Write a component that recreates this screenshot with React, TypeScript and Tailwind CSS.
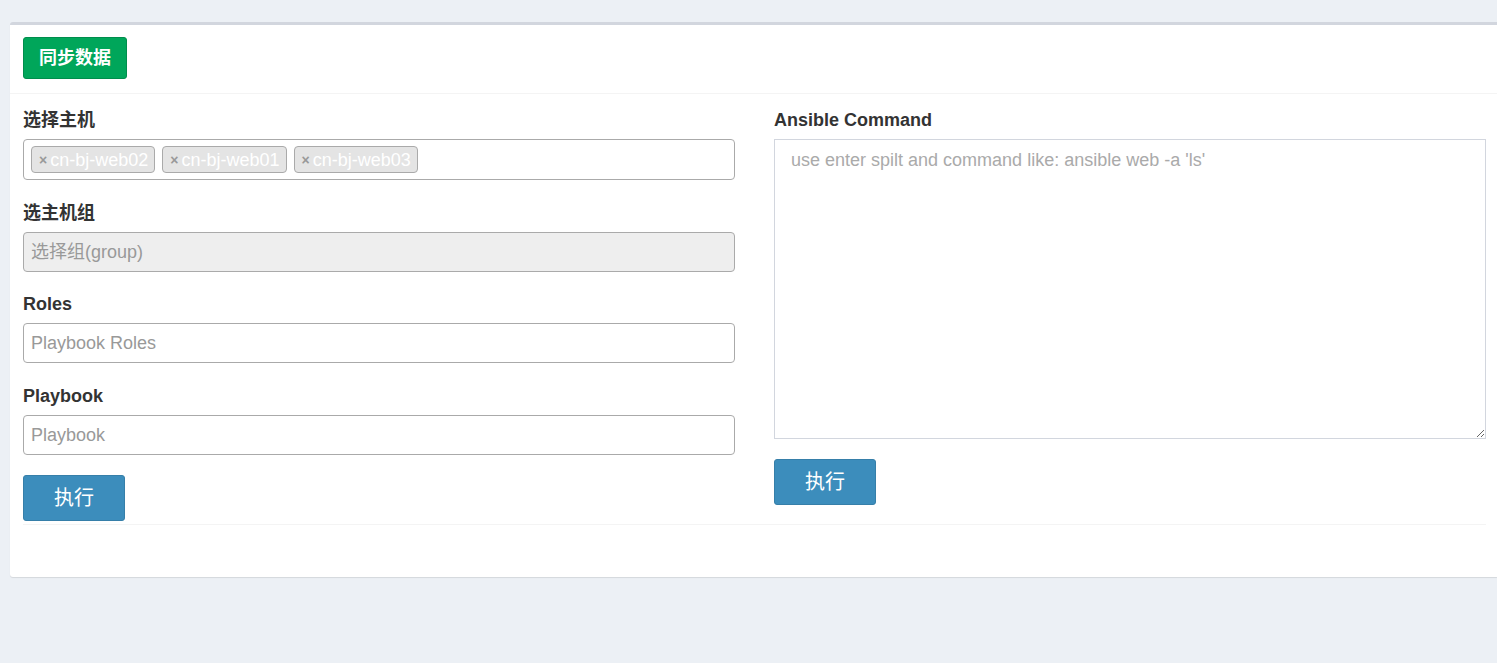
const hosts = ["cn-bj-web02", "cn-bj-web01", "cn-bj-web03"];

const font = "font-['Liberation_Sans','Noto_Sans_CJK_SC',sans-serif]";

function Label({ children }: { children: React.ReactNode }) {
  return <label className="block h-[26px] mb-[6px] text-[18px] leading-[26px] font-bold text-[#333]">{children}</label>;
}

export default function App() {
  return (
    <div className={`min-h-[663px] w-full overflow-hidden bg-[#ecf0f5] pt-[22px] ${font}`}>
      <div className="ml-[10px] w-[1489px] rounded-[3px] border-t-[3px] border-[#d2d6de] bg-white shadow-[0_1px_1px_rgba(0,0,0,0.1)]">
        <div className="border-b border-[#f4f4f4] px-[13px] pt-[12px] pb-[14px]">
          <button className="h-[42px] w-[104px] rounded-[3px] border border-[#008d4c] bg-[#00a65a] text-[18px] font-bold text-white">
            同步数据
          </button>
        </div>
        <div className="px-[13px] pt-[13px] pb-[52px]">
          <div className="grid grid-cols-2 gap-x-[39px] border-b border-[#f4f4f4] pb-[3px]">
            <div>
              <Label>选择主机</Label>
              <div className="flex h-[41px] items-center gap-[7px] rounded-[4px] border border-[#aaa] px-[7px]">
                {hosts.map((h) => (
                  <span key={h} className="flex h-[27px] items-center rounded-[4px] border border-[#aaa] bg-[#e4e4e4] pl-[7px] pr-[6px] text-[18px] leading-none text-white">
                    <span className="mr-[3px] text-[14px] font-bold text-[#999]">×</span>
                    {h}
                  </span>
                ))}
              </div>
              <div className="mt-[20px]">
                <Label>选主机组</Label>
                <div className="flex h-[40px] items-center rounded-[4px] border border-[#aaa] bg-[#eee] px-[7px] text-[18px] text-[#999]">
                  选择组(group)
                </div>
              </div>
              <div className="mt-[19px]">
                <Label>Roles</Label>
                <input
                  placeholder="Playbook Roles"
                  className="block h-[40px] w-full rounded-[4px] border border-[#aaa] px-[7px] text-[18px] text-[#555] outline-none placeholder:text-[#999]"
                />
              </div>
              <div className="mt-[20px]">
                <Label>Playbook</Label>
                <input
                  placeholder="Playbook"
                  className="block h-[40px] w-full rounded-[4px] border border-[#aaa] px-[7px] text-[18px] text-[#555] outline-none placeholder:text-[#999]"
                />
              </div>
              <button className="mt-[20px] h-[46px] w-[102px] rounded-[3px] border border-[#367fa9] bg-[#3c8dbc] text-[20px] text-white">
                执行
              </button>
            </div>
            <div>
              <Label>Ansible Command</Label>
              <textarea
                placeholder="use enter spilt and command like: ansible web -a 'ls'"
                className="block h-[300px] w-full border border-[#d2d6de] px-[16px] py-[8px] text-[18px] leading-[24px] text-[#555] outline-none placeholder:text-[#aaa]"
              />
              <button className="mt-[20px] h-[46px] w-[102px] rounded-[3px] border border-[#367fa9] bg-[#3c8dbc] text-[20px] text-white">
                执行
              </button>
            </div>
          </div>
        </div>
      </div>
    </div>
  );
}
